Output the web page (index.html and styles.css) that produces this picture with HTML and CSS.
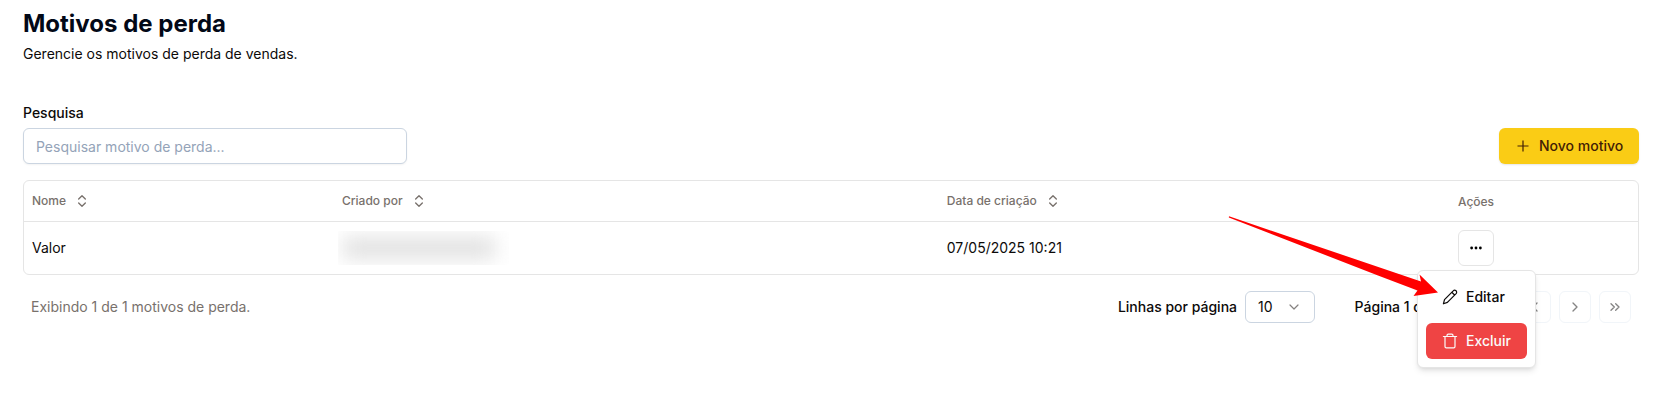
FILE: index.html
```html
<!DOCTYPE html>
<html lang="pt-BR">
<head>
<meta charset="utf-8">
<title>Motivos de perda</title>
<link rel="stylesheet" href="styles.css">
</head>
<body>
<svg class="sprite" aria-hidden="true">
  <symbol id="sort" viewBox="0 0 24 24"><path d="m7 15 5 5 5-5M7 9l5-5 5 5"/></symbol>
  <symbol id="down" viewBox="0 0 24 24"><path d="m6 9 6 6 6-6"/></symbol>
  <symbol id="right" viewBox="0 0 24 24"><path d="m9 18 6-6-6-6"/></symbol>
  <symbol id="left" viewBox="0 0 24 24"><path d="m15 18-6-6 6-6"/></symbol>
  <symbol id="last" viewBox="0 0 24 24"><path d="m6 17 5-5-5-5M13 17l5-5-5-5"/></symbol>
  <symbol id="first" viewBox="0 0 24 24"><path d="m11 17-5-5 5-5M18 17l-5-5 5-5"/></symbol>
</svg>
<main class="page">
  <header>
    <h1 class="title">Motivos de perda</h1>
    <p class="subtitle">Gerencie os motivos de perda de vendas.</p>
  </header>
  <section class="toolbar">
    <div class="search">
      <label class="label" for="q">Pesquisa</label>
      <input class="input" id="q" placeholder="Pesquisar motivo de perda...">
    </div>
    <button class="primary"><svg class="icon plus" viewBox="0 0 16 16"><path d="M8 2.5v11M2.5 8h11"/></svg>Novo motivo</button>
  </section>
  <section class="table">
    <div class="row head">
      <div class="cell">Nome <svg class="icon sort"><use href="#sort"/></svg></div>
      <div class="cell">Criado por <svg class="icon sort"><use href="#sort"/></svg></div>
      <div class="cell">Data de criação <svg class="icon sort"><use href="#sort"/></svg></div>
      <div class="cell plain">Ações</div>
    </div>
    <div class="row body">
      <div class="cell">Valor</div>
      <div class="cell"><div class="redacted"><div class="smudge"></div></div></div>
      <div class="cell date">07/05/2025 10:21</div>
      <div class="cell actions">
        <button class="more"><svg class="dots" viewBox="0 0 16 16"><circle cx="3" cy="8" r="1.6"/><circle cx="8" cy="8" r="1.6"/><circle cx="13" cy="8" r="1.6"/></svg></button>
        <div class="menu">
          <button class="item"><svg class="icon pencil" viewBox="0 0 16 16"><path d="M1.400 14.800 2.500 10.700 11.200 1.900a1.900 1.900 0 0 1 2.900 2.700L5.400 13.400ZM9.800 3.300l2.800 2.700"/></svg>Editar</button>
          <button class="item danger"><svg class="icon" viewBox="0 0 16 16"><path d="M1.400 3.500h13.200M5 3.500v-1a1.300 1.300 0 0 1 1.300-1.300h3.400a1.300 1.300 0 0 1 1.300 1.300v1M3 3.500v10a1.300 1.300 0 0 0 1.300 1.300h7.400a1.300 1.300 0 0 0 1.300-1.300v-10"/></svg>Excluir</button>
        </div>
      </div>
    </div>
  </section>
  <footer class="footer">
    <span class="count">Exibindo 1 de 1 motivos de perda.</span>
    <span class="strong">Linhas por página</span>
    <button class="select">10<svg class="icon"><use href="#down"/></svg></button>
    <span class="strong current">Página 1 de 1</span>
    <nav class="pager">
      <button class="nav"><svg class="icon"><use href="#first"/></svg></button>
      <button class="nav"><svg class="icon"><use href="#left"/></svg></button>
      <button class="nav"><svg class="icon"><use href="#right"/></svg></button>
      <button class="nav"><svg class="icon"><use href="#last"/></svg></button>
    </nav>
  </footer>
</main>
<svg class="arrow" viewBox="0 0 212 84"><path d="M1 .3 193 65.500 191.500 58.500 210 76.500 185.500 80 189.500 74.500 150 59.500 .8 1.500Z"/></svg>
</body>
</html>
```
FILE: styles.css
```css
* { box-sizing: border-box; }
body { margin: 0; background: #fff; color: #0c0a09; font: 400 14px/20px Inter, "Liberation Sans", sans-serif; overflow: hidden; }
button, input { font: inherit; color: inherit; margin: 0; }
button { display: flex; align-items: center; background: #fff; padding: 0; }
.sprite { display: none; }
.page { padding: 8px 24px 0 23px; height: 405px; }
.title { margin: 0; font-size: 24px; line-height: 32px; font-weight: 700; color: #020817; }
.subtitle { margin: 4px 0 0; }
.toolbar { display: flex; justify-content: space-between; align-items: flex-end; margin-top: 39px; }
.search { width: 384px; }
.label { display: block; font-weight: 500; margin-bottom: 5px; }
.input { display: block; width: 100%; height: 36px; padding: 4px 12px; border: 1px solid #cbd5e1; border-radius: 6px; box-shadow: 0 1px 2px rgb(0 0 0 / 5%); outline: 0; }
.input::placeholder { color: #94a3b8; opacity: 1; }
.icon { width: 16px; height: 16px; flex: none; fill: none; stroke: currentColor; stroke-width: 2; stroke-linecap: round; stroke-linejoin: round; }
.primary { height: 36px; width: 140px; padding-left: 16px; gap: 8px; border: 0; border-radius: 6px; background: #facc15; color: #422006; font-weight: 500; box-shadow: 0 1px 2px rgb(0 0 0 / 10%); }
.plus { stroke-width: 1.2; stroke-linecap: butt; }
.table { margin-top: 16px; border: 1px solid #e5e5e5; border-radius: 6px; }
.row { display: grid; grid-template-columns: 310px 604.8px 511.2px 1fr; }
.head { height: 41px; border-bottom: 1px solid #e5e5e5; color: #78716c; font-size: 12px; font-weight: 500; }
.body { height: 52px; }
.cell { display: flex; align-items: center; padding-left: 8px; }
.sort { margin-left: 8px; stroke-width: 2; }
.plain { padding-top: 1px; }
.redacted { width: 171px; height: 34px; margin-left: -4px; overflow: hidden; display: flex; align-items: center; }
.smudge { width: 152px; height: 20px; margin-left: 5px; background: #dedede; filter: blur(10px); }
.actions { position: relative; }
.more { width: 36px; height: 36px; justify-content: center; border: 1px solid #e5e5e5; border-radius: 6px; }
.dots { width: 14px; height: 14px; }
.menu { position: absolute; z-index: 2; left: -33px; top: 48px; width: 119px; height: 98px; padding: 8px; display: flex; flex-direction: column; gap: 8px; background: #fff; border: 1px solid #e5e5e5; border-radius: 6px; box-shadow: 0 4px 6px -1px rgb(0 0 0 / 10%), 0 2px 4px -2px rgb(0 0 0 / 10%); }
.item { height: 36px; padding-left: 16px; gap: 8px; border: 0; border-radius: 6px; flex: none; font-weight: 500; }
.item .icon { stroke-width: 1.2; }
.item .pencil { stroke-width: 1.2; }
.danger { background: #ef4444; color: #fafaf9; }
.footer { display: flex; align-items: center; height: 32px; margin-top: 16px; padding: 0 8px; }
.count { flex: 1; color: #78716c; }
.strong { font-weight: 500; }
.select { width: 70px; height: 32px; margin-left: 8px; padding: 0 12px; justify-content: space-between; border: 1px solid #cbd5e1; border-radius: 6px; }
.select .icon { stroke: #858280; stroke-width: 1.8; }
.current { width: 124.4px; margin-left: 39.6px; }
.pager { display: flex; gap: 8px; }
.nav { width: 32px; height: 32px; justify-content: center; border: 1px solid #f1f5f9; border-radius: 6px; color: #858484; }
.arrow { position: absolute; z-index: 3; left: 1228px; top: 216px; width: 212px; height: 84px; fill: #f00; }
```
